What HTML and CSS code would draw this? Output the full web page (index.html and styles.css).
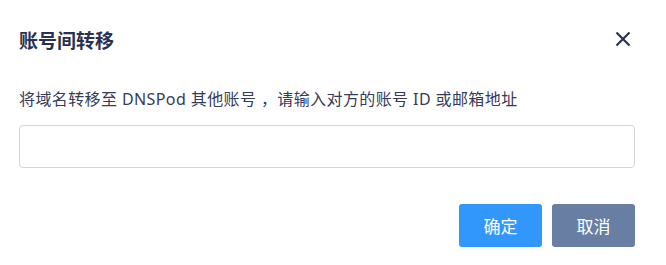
FILE: index.html
```html
<!DOCTYPE html>
<html lang="zh-CN">
<head>
<meta charset="utf-8">
<link rel="stylesheet" href="styles.css">
</head>
<body>
<div class="dialog">
  <div class="header">
    <h2 class="title">账号间转移</h2>
    <button class="close" aria-label="关闭">
      <svg width="16" height="16" viewBox="0 0 16 16"><path d="M1.5 1.5 L14.5 14.5 M14.5 1.5 L1.5 14.5" stroke="#2b3352" stroke-width="2.2" fill="none"/></svg>
    </button>
  </div>
  <p class="desc">将域名转移至 DNSPod 其他账号 ，请输入对方的账号 ID 或邮箱地址</p>
  <input class="field" type="text">
  <div class="footer">
    <button class="btn btn-primary">确定</button>
    <button class="btn btn-secondary">取消</button>
  </div>
</div>
</body>
</html>
```
FILE: styles.css
```css
html, body {
  margin: 0;
  padding: 0;
  background: #ffffff;
}
body {
  font-family: "Noto Sans", "Noto Sans CJK SC", sans-serif;
}
.dialog {
  padding: 28px 31px 0 19px;
  display: flex;
  flex-direction: column;
}
.header {
  display: flex;
  align-items: center;
  justify-content: space-between;
  height: 24px;
}
.title {
  margin: 0;
  font-size: 19px;
  line-height: 24px;
  font-weight: 700;
  color: #2a3150;
  font-family: "Noto Sans CJK SC", sans-serif;
}
.close {
  border: 0;
  background: none;
  padding: 0;
  margin-right: 4px;
  width: 16px;
  height: 16px;
  display: flex;
  margin-top: -3px;
}
.desc {
  margin: 35px 0 0 0;
  font-size: 16px;
  line-height: 24px;
  letter-spacing: 0.4px;
  color: #353b58;
}
.field {
  margin-top: 14px;
  height: 43px;
  box-sizing: border-box;
  border: 1px solid #d0d4dd;
  border-radius: 4px;
  width: 100%;
  padding: 0 12px;
  font-size: 16px;
  outline: none;
}
.footer {
  margin-top: 36px;
  display: flex;
  justify-content: flex-end;
  gap: 10px;
}
.btn {
  width: 83px;
  height: 43px;
  border: 0;
  border-radius: 3px;
  color: #ffffff;
  font-size: 17px;
  font-family: "Noto Sans CJK SC", sans-serif;
  padding: 0;
}
.btn-primary {
  background: #3297fc;
}
.btn-secondary {
  background: #687fa3;
}
```
